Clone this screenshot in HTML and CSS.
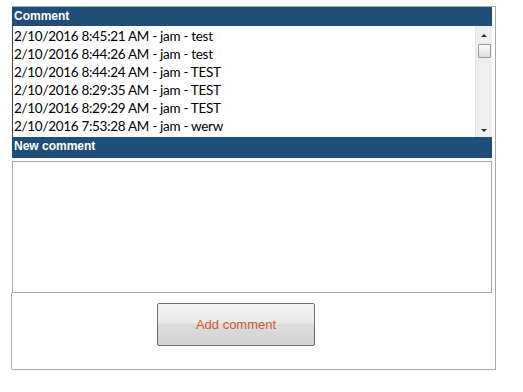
FILE: index.html
```html
<!DOCTYPE html>
<html>
<head>
<meta charset="utf-8">
<link rel="stylesheet" href="styles.css">
</head>
<body>
<div class="panel">
  <div class="hdr">Comment</div>
  <div class="list">
    <div class="rows">
      <div class="row">2/10/2016 8:45:21 AM - jam - test</div>
      <div class="row">2/10/2016 8:44:26 AM - jam - test</div>
      <div class="row">2/10/2016 8:44:24 AM - jam - TEST</div>
      <div class="row">2/10/2016 8:29:35 AM - jam - TEST</div>
      <div class="row">2/10/2016 8:29:29 AM - jam - TEST</div>
      <div class="row">2/10/2016 7:53:28 AM - jam - werw</div>
    </div>
    <div class="sbar">
      <div class="arrow up"></div>
      <div class="thumb"></div>
      <div class="track"></div>
      <div class="arrow down"></div>
    </div>
  </div>
  <div class="hdr hdr2">New comment</div>
  <div class="ta"></div>
  <div class="btnrow"><div class="btn">Add comment</div></div>
</div>
</body>
</html>
```
FILE: styles.css
```css
html, body { margin: 0; padding: 0; background: #fff; }
.panel {
  margin: 6px 0 0 12px;
  width: 480px;
  padding-right: 3px;
  border: 1px solid #a9a9a9;
  border-left: 0;
  height: 362px;
  box-sizing: content-box;
  display: flex;
  flex-direction: column;
}
.hdr {
  background: #1f4e79;
  color: #fff;
  font: bold 12px "Liberation Sans", Arial, sans-serif;
  height: 19px;
  line-height: 18px;
  padding-left: 2px;
  box-sizing: border-box;
}
.hdr2 { height: 21px; line-height: 19px; }
.list {
  display: flex;
  height: 111px;
  border-left: 1px solid #444;
  box-sizing: border-box;
}
.rows {
  flex: 1;
  padding-top: 1px;
  padding-left: 1px;
}
.row {
  font: 13.5px "Lato", "Liberation Sans", sans-serif;
  letter-spacing: -0.3px;
  line-height: 18px;
  height: 18px;
  color: #000;
  white-space: nowrap;
}
.sbar {
  width: 16px;
  background: #efefef;
  border-left: 1px solid #e2e2e2;
  display: flex;
  flex-direction: column;
  align-items: center;
}
.arrow { width: 0; height: 0; border-left: 3px solid transparent; border-right: 3px solid transparent; }
.arrow.up { border-bottom: 3px solid #333; margin: 8px 0 7px; }
.arrow.down { border-top: 3px solid #333; margin: 0 0 5px; }
.thumb {
  width: 13px;
  height: 14px;
  box-sizing: border-box;
  border: 1px solid #9a9a9a;
  border-radius: 1px;
  background: linear-gradient(#fafafa, #dcdcdc);
}
.track { flex: 1; }
.ta {
  margin-top: 3px;
  height: 132px;
  border: 1px solid #aaa;
  box-sizing: border-box;
}
.btnrow {
  flex: 1;
  padding: 10px 0 0 145px;
  border-left: 1px solid #a9a9a9;
  margin-left: -1px;
}
.btn {
  width: 158px;
  height: 43px;
  box-sizing: border-box;
  border: 1px solid #6e6e6e;
  border-radius: 2px;
  background: linear-gradient(#f3f3f3 0%, #e9e9e9 45%, #dcdcdc 50%, #d2d2d2 100%);
  color: #cc5a35;
  font: 13px "Liberation Sans", Arial, sans-serif;
  text-align: center;
  line-height: 41px;
}
```
